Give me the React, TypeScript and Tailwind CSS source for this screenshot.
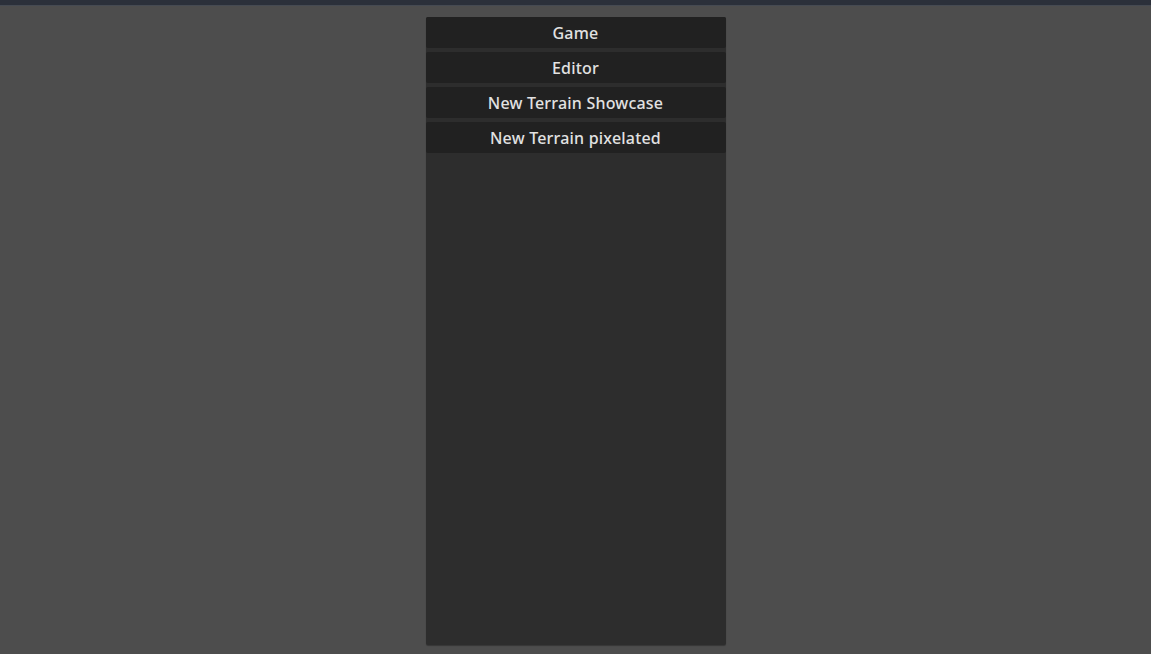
export default function App() {
  const items = ["Game", "Editor", "New Terrain Showcase", "New Terrain pixelated"];
  return (
    <div className="w-[1151px] h-[654px] bg-[#4d4d4d] flex flex-col overflow-hidden" style={{ fontFamily: '"Noto Sans", sans-serif' }}>
      <div className="h-[6px] bg-[#2b303a] border-b border-[#454a52] shrink-0" />
      <div className="flex justify-center pt-[11px]">
        <div className="w-[300px] h-[628px] bg-[#2d2d2d] rounded-[2px] flex flex-col gap-[4px] shadow-[0_1px_1px_rgba(0,0,0,0.3)]">
          {items.map((t) => (
            <div key={t} className="h-[31px] bg-[#212121] rounded-[2px] flex items-center justify-center text-[16px] tracking-[0.2px] text-[#e2e2e2] font-medium">
              {t}
            </div>
          ))}
        </div>
      </div>
    </div>
  );
}
